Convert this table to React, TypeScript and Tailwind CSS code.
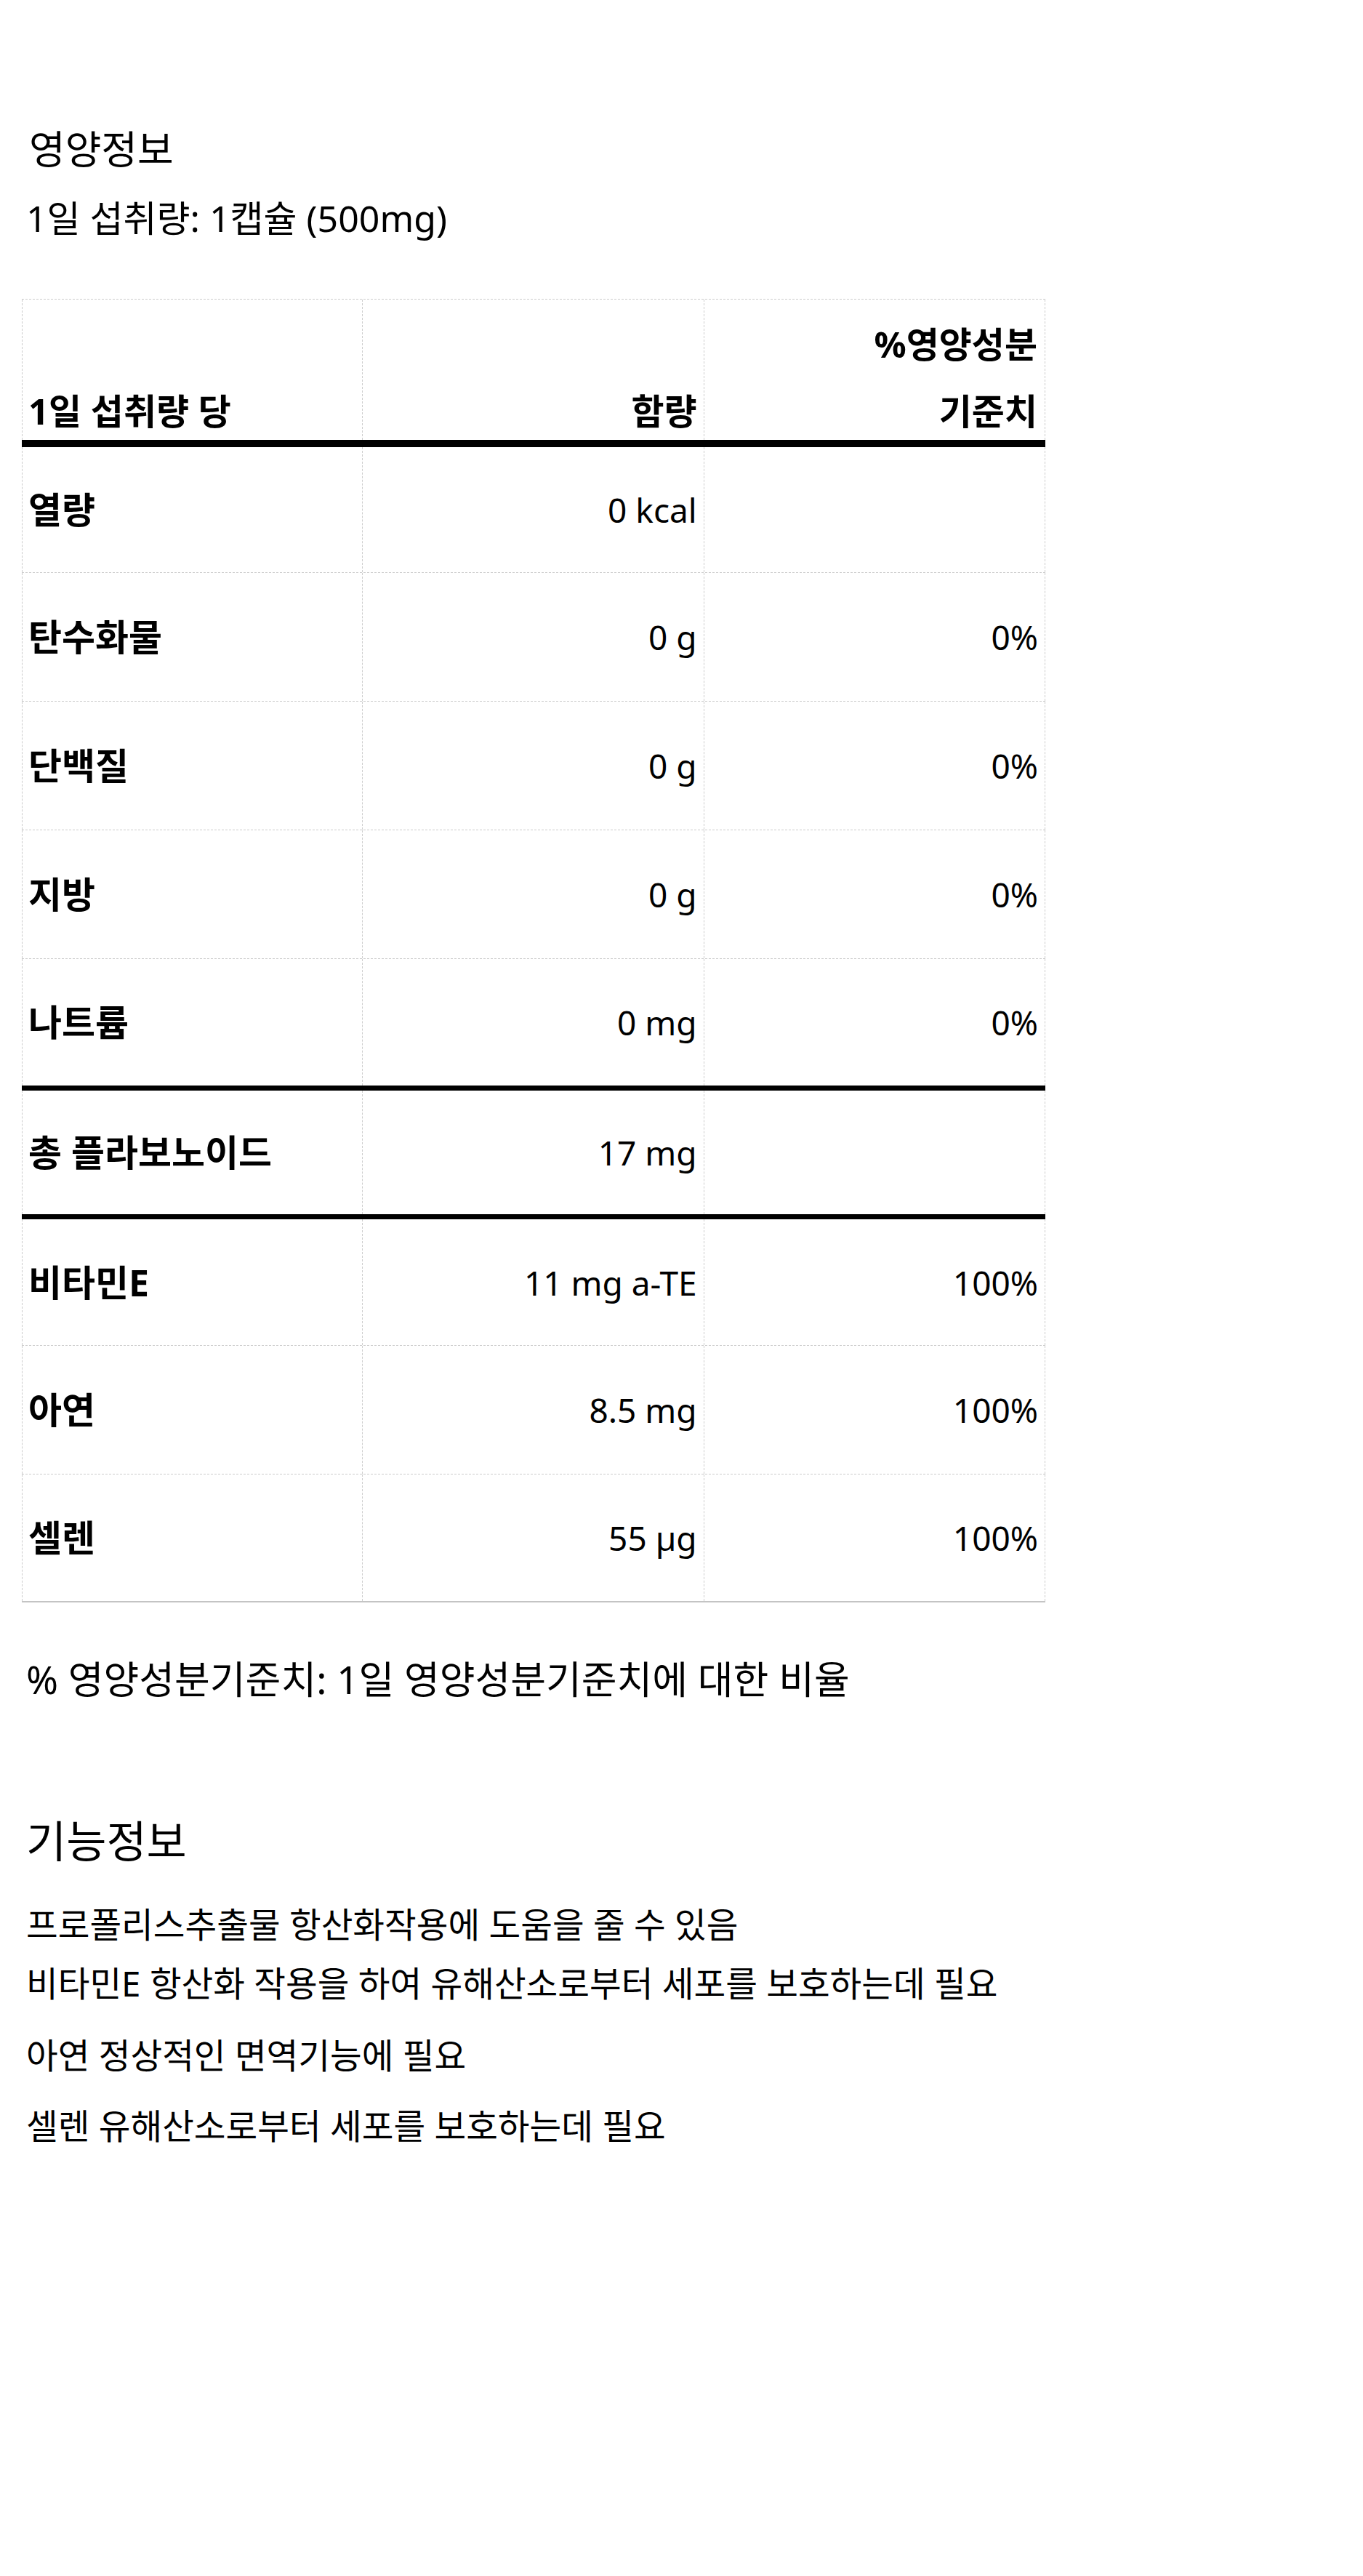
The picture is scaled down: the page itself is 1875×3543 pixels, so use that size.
const rows = [
  { name: "열량", amount: "0 kcal", dv: "", h: "h-[173px]", border: "border-b border-dashed border-[#cccccc]" },
  { name: "탄수화물", amount: "0 g", dv: "0%", h: "h-[177px]", border: "border-b border-dashed border-[#cccccc]" },
  { name: "단백질", amount: "0 g", dv: "0%", h: "h-[177px]", border: "border-b border-dashed border-[#cccccc]" },
  { name: "지방", amount: "0 g", dv: "0%", h: "h-[177px]", border: "border-b border-dashed border-[#cccccc]" },
  { name: "나트륨", amount: "0 mg", dv: "0%", h: "h-[181px]", border: "border-b-[7px] border-solid border-black" },
  { name: "총 플라보노이드", amount: "17 mg", dv: "", h: "h-[177px]", border: "border-b-[7px] border-solid border-black" },
  { name: "비타민E", amount: "11 mg a-TE", dv: "100%", h: "h-[174px]", border: "border-b border-dashed border-[#cccccc]" },
  { name: "아연", amount: "8.5 mg", dv: "100%", h: "h-[177px]", border: "border-b border-dashed border-[#cccccc]" },
  { name: "셀렌", amount: "55 µg", dv: "100%", h: "h-[176px]", border: "border-b-2 border-solid border-[#c4c4c4]" },
];

const functions = [
  { name: "프로폴리스추출물", text: "항산화작용에 도움을 줄 수 있음", mt: "mt-[53px]" },
  { name: "비타민E", text: "항산화 작용을 하여 유해산소로부터 세포를 보호하는데 필요", mt: "mt-[21px]" },
  { name: "아연", text: "정상적인 면역기능에 필요", mt: "mt-[39px]" },
  { name: "셀렌", text: "유해산소로부터 세포를 보호하는데 필요", mt: "mt-[37px]" },
];

function Cell({ children, className = "" }: { children?: React.ReactNode; className?: string }) {
  return (
    <div className={`flex h-full items-center border-r border-dashed border-[#cccccc] ${className}`}>
      {children}
    </div>
  );
}

export default function App() {
  return (
    <div className="min-h-[3543px] w-full bg-white text-black font-['Noto_Sans','Noto_Sans_CJK_KR',sans-serif]">
      <div className="pt-[175px]">
        {/* Title */}
        <h2 className="pl-[40px] text-[54px] leading-[60px] font-normal">영양정보</h2>
        <p className="mt-[35px] pl-[36px] text-[50px] leading-[60px]">1일 섭취량: 1캡슐 (500mg)</p>

        {/* Nutrition table */}
        <div className="mt-[81px] ml-[30px] w-[1408px] border-t border-dashed border-[#cccccc]">
          {/* Header */}
          <div className="grid h-[203px] grid-cols-3 border-b-[10px] border-solid border-black text-[49px] font-bold">
            <div className="flex h-full flex-col justify-end border-l border-r border-dashed border-[#cccccc] pb-[15px] pl-[8px]">
              <div className="leading-[50px]">1일 섭취량 당</div>
            </div>
            <div className="flex h-full flex-col justify-end border-r border-dashed border-[#cccccc] pb-[15px] pr-[9px] text-right">
              <div className="leading-[50px]">함량</div>
            </div>
            <div className="flex h-full flex-col justify-end border-r border-dashed border-[#cccccc] pb-[15px] pr-[10px] text-right">
              <div className="leading-[50px]">%영양성분</div>
              <div className="mt-[42px] leading-[50px]">기준치</div>
            </div>
          </div>

          {/* Body rows */}
          {rows.map((r) => (
            <div key={r.name} className={`grid grid-cols-3 leading-[50px] ${r.h} ${r.border}`}>
              <Cell className="border-l pl-[8px] text-[50px] font-bold">{r.name}</Cell>
              <Cell className="justify-end pr-[9px] text-[46px]">{r.amount}</Cell>
              <Cell className="justify-end pr-[9px] text-[46px]">{r.dv}</Cell>
            </div>
          ))}
        </div>

        {/* Footnote */}
        <p className="mt-[76px] pl-[36px] text-[53px] leading-[60px]">
          % 영양성분기준치: 1일 영양성분기준치에 대한 비율
        </p>

        {/* Functional info */}
        <h2 className="mt-[160px] pl-[36px] text-[60px] leading-[64px] font-normal">기능정보</h2>
        {functions.map((f) => (
          <p key={f.name} className={`${f.mt} pl-[36px] text-[47.5px] leading-[60px]`}>
            <span>{f.name}</span> {f.text}
          </p>
        ))}
      </div>
    </div>
  );
}
